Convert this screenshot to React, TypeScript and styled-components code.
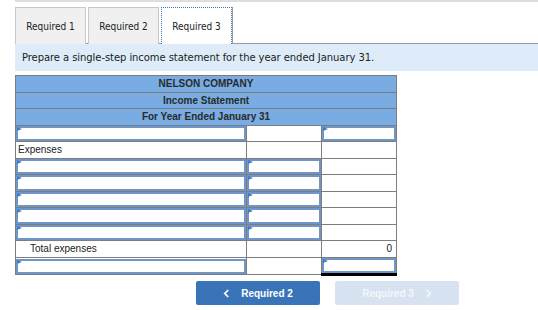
import React from "react";
import styled, { createGlobalStyle } from "styled-components";

const GlobalStyle = createGlobalStyle`
  html, body {
    margin: 0;
    padding: 0;
    background: #ffffff;
  }
  body {
    font-family: "Liberation Sans", Arial, sans-serif;
    color: #222;
  }
`;

type CellKind = "blank" | "input" | "text";

interface CellDef {
  kind: CellKind;
  text?: string;
  indent?: boolean;
  right?: boolean;
  topRule?: boolean;
  bottomRule?: boolean;
}

const blank: CellDef = { kind: "blank" };
const input: CellDef = { kind: "input" };

const heading = ["NELSON COMPANY", "Income Statement", "For Year Ended January 31"];

const rows: CellDef[][] = [
  [input, blank, input],
  [{ kind: "text", text: "Expenses" }, blank, blank],
  [input, input, blank],
  [input, input, blank],
  [input, input, blank],
  [input, input, blank],
  [input, input, blank],
  [
    { kind: "text", text: "Total expenses", indent: true },
    { kind: "blank", topRule: true },
    { kind: "text", text: "0", right: true },
  ],
  [input, blank, { kind: "input", topRule: true, bottomRule: true }],
];

const App = () => {
  return (
    <Page>
      <GlobalStyle />
      <TopRule />
      <TabBar>
        <Tab>Required 1</Tab>
        <Tab>Required 2</Tab>
        <Tab $active>Required 3</Tab>
      </TabBar>
      <Instruction>
        Prepare a single-step income statement for the year ended January 31.
      </Instruction>

      <Sheet>
        <colgroup>
          <col style={{ width: 231 }} />
          <col style={{ width: 75 }} />
          <col style={{ width: 75 }} />
        </colgroup>
        <tbody>
          {heading.map((h, hi) => (
            <Row key={h} $tall={hi % 2 === 0}>
              <HeadCell colSpan={3}>{h}</HeadCell>
            </Row>
          ))}
          {rows.map((row, ri) => {
            const tall = (ri + heading.length) % 2 === 0;
            return (
              <Row key={ri} $tall={tall}>
                {row.map((c, ci) => (
                  <Cell
                    key={ci}
                    $input={c.kind === "input"}
                    $indent={c.indent}
                    $right={c.right}
                    $topRule={c.topRule}
                    $bottomRule={c.bottomRule}
                  >
                    {c.kind === "input" ? <EntryBox $tall={tall} /> : c.text}
                  </Cell>
                ))}
              </Row>
            );
          })}
        </tbody>
      </Sheet>

      <NavRow>
        <NavButton>
          <Chevron viewBox="0 0 8 10">
            <path d="M6 1 L2 5 L6 9" />
          </Chevron>
          Required 2
        </NavButton>
        <NavButton $disabled>
          Required 3
          <Chevron viewBox="0 0 8 10">
            <path d="M2 1 L6 5 L2 9" />
          </Chevron>
        </NavButton>
      </NavRow>
    </Page>
  );
};

export default App;

const Page = styled.div`
  width: 538px;
  height: 310px;
  padding-left: 15px;
  box-sizing: border-box;
  overflow: hidden;
`;

const TopRule = styled.div`
  height: 2px;
  background: #dedede;
`;

const TabBar = styled.div`
  display: flex;
  align-items: flex-end;
  gap: 1px;
  margin-top: 5px;
  position: relative;
  z-index: 1;
`;

const Tab = styled.div<{ $active?: boolean }>`
  width: 71px;
  height: 37px;
  box-sizing: border-box;
  display: flex;
  align-items: center;
  justify-content: center;
  margin-bottom: -1px;
  margin-right: ${(p) => (p.$active ? "0" : "1px")};
  font-family: "DejaVu Sans Condensed", "DejaVu Sans", sans-serif;
  font-stretch: condensed;
  font-size: 10px;
  color: #222;
  background: ${(p) => (p.$active ? "#ffffff" : "#f0f0f0")};
  border: 1px solid #c9c9c9;
  border-bottom: none;
  ${(p) =>
    p.$active &&
    `
    border: 1px dotted #3b78c4;
    border-bottom: none;
    box-shadow: 1px 0 0 #9a9a9a;
  `}
`;

const Instruction = styled.div`
  height: 28px;
  box-sizing: border-box;
  border-top: 1px solid #9a9a9a;
  background: #ddecf8;
  display: flex;
  align-items: center;
  padding-left: 7px;
  font-family: "DejaVu Sans", Verdana, sans-serif;
  font-size: 10px;
  letter-spacing: -0.07px;
  color: #222;
`;

const Sheet = styled.table`
  margin-top: 4px;
  width: 382px;
  border-collapse: collapse;
  table-layout: fixed;
  border: 1px solid #7d7d7d;
`;

const Row = styled.tr<{ $tall?: boolean }>`
  height: ${(p) => (p.$tall ? "17px" : "16px")};
`;

const HeadCell = styled.td`
  padding: 0;
  background: #78ace2;
  border: 1px solid #7d7d7d;
  text-align: center;
  font-weight: bold;
  font-size: 10px;
  line-height: 12px;
  color: #2a2a2a;
`;

const Cell = styled.td<{
  $input?: boolean;
  $indent?: boolean;
  $right?: boolean;
  $topRule?: boolean;
  $bottomRule?: boolean;
}>`
  padding: ${(p) =>
    p.$input ? "0" : p.$indent ? "0 0 0 14px" : p.$right ? "0 4px 0 0" : "0 0 0 2px"};
  border: 1px solid #7d7d7d;
  border-top: ${(p) => (p.$topRule ? "1px solid #000" : "1px solid #7d7d7d")};
  border-bottom: ${(p) => (p.$bottomRule ? "3px solid #000" : "1px solid #7d7d7d")};
  text-align: ${(p) => (p.$right ? "right" : "left")};
  font-size: 10px;
  line-height: 12px;
  color: #222;
  background: #fff;
  vertical-align: middle;
`;

const EntryBox = styled.div<{ $tall?: boolean }>`
  position: relative;
  height: ${(p) => (p.$tall ? "16px" : "15px")};
  box-sizing: border-box;
  border: 2px solid #6f96c9;
  background: #fff;
  &::before {
    content: "";
    position: absolute;
    left: -1px;
    top: -1px;
    border-top: 2.5px solid transparent;
    border-bottom: 2.5px solid transparent;
    border-left: 5px solid #3f7cd0;
  }
`;

const NavRow = styled.div`
  display: flex;
  gap: 15px;
  margin-top: 5px;
  padding-left: 181px;
`;

const NavButton = styled.div<{ $disabled?: boolean }>`
  width: 124px;
  height: 24px;
  box-sizing: border-box;
  border-radius: 2px;
  display: flex;
  align-items: center;
  justify-content: center;
  gap: 11px;
  font-weight: bold;
  font-size: 10px;
  color: ${(p) => (p.$disabled ? "#f3f7fb" : "#ffffff")};
  background: ${(p) => (p.$disabled ? "#d7e3f1" : "#3a74b8")};
`;

const Chevron = styled.svg`
  width: 7px;
  height: 9px;
  fill: none;
  stroke: currentColor;
  stroke-width: 2;
`;
